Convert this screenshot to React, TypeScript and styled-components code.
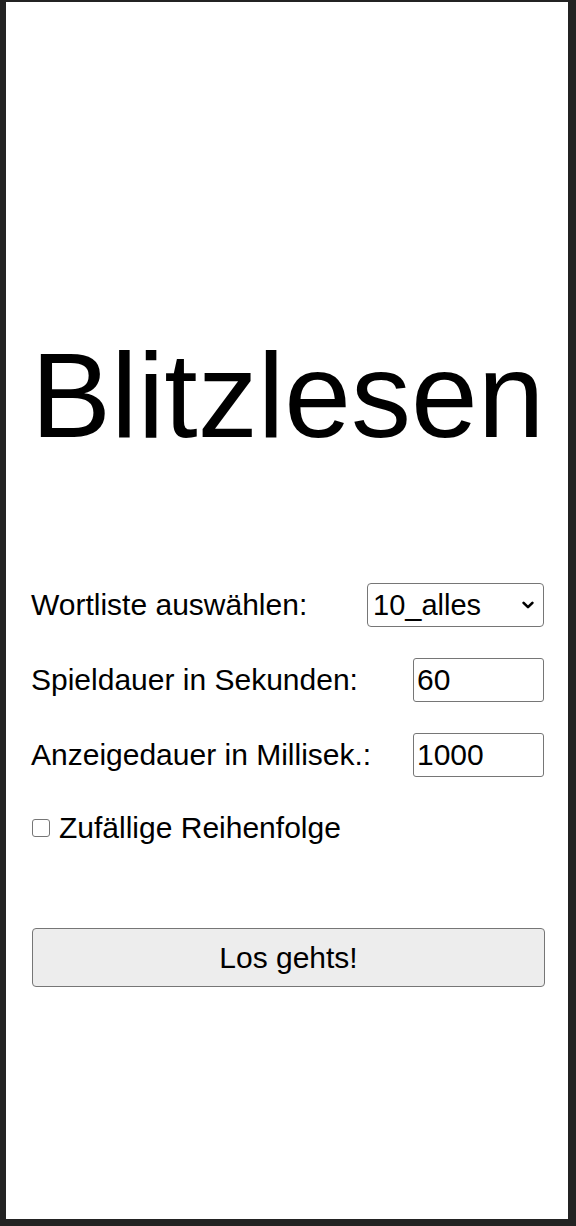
import React from 'react';
import styled, { createGlobalStyle } from 'styled-components';

const GlobalStyle = createGlobalStyle`
    html, body {
        margin: 0;
        padding: 0;
        background: #232323;
    }
    * {
        box-sizing: border-box;
    }
`
const Frame = styled.div`
    padding: 2px 8px 7px 6px;
    height: 1226px;
`
const Page = styled.main`
    background: #ffffff;
    height: 100%;
    padding: 324px 24px 0 25px;
    font-family: "Liberation Sans", Arial, sans-serif;
    color: #000000;
`
const Title = styled.h1`
    margin: 0;
    font-size: 120px;
    font-weight: normal;
    line-height: 138px;
`
const Form = styled.form`
    display: flex;
    flex-flow: column;
    gap: 31px;
    margin-top: 119px;
`
const Row = styled.div`
    display: flex;
    align-items: center;
    justify-content: space-between;
    height: 44px;
`
const Label = styled.label`
    font-size: 30px;
    line-height: 34px;
`
const SelectWrap = styled.div`
    position: relative;
    width: 177px;
    height: 44px;
    & > svg {
        position: absolute;
        right: 10px;
        top: 18px;
        pointer-events: none;
    }
`
const Select = styled.select`
    appearance: none;
    width: 100%;
    height: 100%;
    padding: 0 0 0 5px;
    border: 1px solid #767676;
    border-radius: 4px;
    background: #ffffff;
    font-family: inherit;
    font-size: 29px;
    color: #000000;
`
const Input = styled.input`
    width: 131px;
    height: 44px;
    padding: 0 3px;
    border: 1px solid #767676;
    border-radius: 3px;
    font-family: inherit;
    font-size: 30px;
    color: #000000;
`
const CheckRow = styled.label`
    display: flex;
    align-items: center;
    margin-top: 3px;
    font-size: 30px;
    line-height: 34px;
`
const Check = styled.span`
    width: 18px;
    height: 18px;
    margin: 0 9px 0 1px;
    border: 1px solid #767676;
    border-radius: 3px;
    background: #ffffff;
`
const Button = styled.button`
    height: 59px;
    margin: 52px -1px 0 1px;
    border: 1px solid #767676;
    border-radius: 4px;
    background: #ededed;
    font-family: inherit;
    font-size: 30px;
    color: #000000;
`

const App: React.FC = () => {
    return (
        <Frame>
            <GlobalStyle />
            <Page>
                <Title>Blitzlesen</Title>
                <Form onSubmit={e => e.preventDefault()}>
                    <Row>
                        <Label>Wortliste auswählen:</Label>
                        <SelectWrap>
                            <Select defaultValue="10_alles">
                                <option>10_alles</option>
                            </Select>
                            <svg width="12" height="9" viewBox="0 0 12 9">
                                <path d="M1.6 1.8 L6 6.2 L10.4 1.8" fill="none" stroke="#000" strokeWidth="2.6" strokeLinecap="round" strokeLinejoin="round" />
                            </svg>
                        </SelectWrap>
                    </Row>
                    <Row>
                        <Label>Spieldauer in Sekunden:</Label>
                        <Input defaultValue="60" />
                    </Row>
                    <Row>
                        <Label>Anzeigedauer in Millisek.:</Label>
                        <Input defaultValue="1000" />
                    </Row>
                    <CheckRow>
                        <Check />
                        Zufällige Reihenfolge
                    </CheckRow>
                    <Button type="submit">Los gehts!</Button>
                </Form>
            </Page>
        </Frame>
    )
}

export default App;
